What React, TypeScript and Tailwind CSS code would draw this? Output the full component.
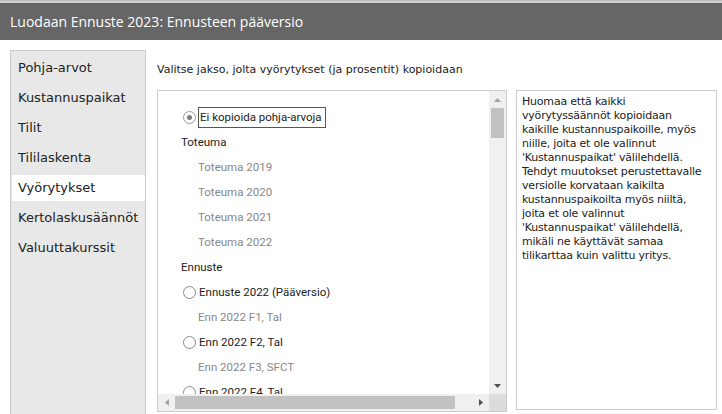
import React from "react";

const tabs = [
  "Pohja-arvot",
  "Kustannuspaikat",
  "Tilit",
  "Tililaskenta",
  "Vyörytykset",
  "Kertolaskusäännöt",
  "Valuuttakurssit",
];

type Row =
  | { kind: "radio"; label: string; checked?: boolean; focused?: boolean }
  | { kind: "group"; label: string }
  | { kind: "item"; label: string };

const rows: Row[] = [
  { kind: "radio", label: "Ei kopioida pohja-arvoja", checked: true, focused: true },
  { kind: "group", label: "Toteuma" },
  { kind: "item", label: "Toteuma 2019" },
  { kind: "item", label: "Toteuma 2020" },
  { kind: "item", label: "Toteuma 2021" },
  { kind: "item", label: "Toteuma 2022" },
  { kind: "group", label: "Ennuste" },
  { kind: "radio", label: "Ennuste 2022 (Pääversio)" },
  { kind: "item", label: "Enn 2022 F1, Tal" },
  { kind: "radio", label: "Enn 2022 F2, Tal" },
  { kind: "item", label: "Enn 2022 F3, SFCT" },
  { kind: "radio", label: "Enn 2022 F4, Tal" },
];

const note = [
  "Huomaa että kaikki",
  "vyörytyssäännöt kopioidaan",
  "kaikille kustannuspaikoille, myös",
  "niille, joita et ole valinnut",
  "'Kustannuspaikat' välilehdellä.",
  "Tehdyt muutokset perustettavalle",
  "versiolle korvataan kaikilta",
  "kustannuspaikoilta myös niiltä,",
  "joita et ole valinnut",
  "'Kustannuspaikat' välilehdellä,",
  "mikäli ne käyttävät samaa",
  "tilikarttaa kuin valittu yritys.",
];

function Radio({ checked }: { checked?: boolean }) {
  return (
    <span
      className={`flex h-[13px] w-[13px] shrink-0 items-center justify-center rounded-full border bg-white ${
        checked ? "border-[#9a9a9a]" : "border-[#8a8a8a]"
      }`}
    >
      {checked && <span className="h-[5px] w-[5px] rounded-full bg-[#7a7a7a]" />}
    </span>
  );
}

export default function App() {
  return (
    <div className="flex h-[414px] w-[722px] flex-col overflow-hidden bg-white font-['DejaVu_Sans',sans-serif]">
      <div className="h-[3px] border-t border-[#bdbdbd] bg-[#d0d0d0]" />
      <div className="flex h-[37px] items-center bg-[#666666] px-[10px] font-['Open_Sans',sans-serif] text-[14px] text-white">
        Luodaan Ennuste 2023: Ennusteen pääversio
      </div>

      <div className="flex min-h-0 flex-1 pt-[10px]">
        <div className="ml-[10px] flex w-[136px] shrink-0 flex-col border border-b-0 border-[#cccccc] bg-[#e8e8e8] pt-[2px] pl-[1px]">
          {tabs.map((t) => (
            <div key={t} className="h-[30px] py-[2px]">
              <div
                className={`flex h-full items-center pl-[6px] text-[13px] text-[#222] ${
                  t === "Vyörytykset" ? "rounded-l-[2px] bg-white" : ""
                }`}
              >
                {t}
              </div>
            </div>
          ))}
        </div>

        <div className="flex min-w-0 flex-1 flex-col pl-[11px]">
          <div className="flex h-[40px] items-center text-[11px] text-[#222]">
            Valitse jakso, jolta vyörytykset (ja prosentit) kopioidaan
          </div>
          <div className="flex min-h-0 flex-1 gap-[9px] pb-[2px]">
            <div className="flex h-[322px] w-[350px] flex-col border border-[#cccccc]">
              <div className="flex min-h-0 flex-1">
                <div className="flex-1 overflow-hidden pl-[25px] pt-[14px] font-['Roboto',sans-serif] text-[11.5px]">
                  {rows.map((r) => (
                    <div key={r.label} className="flex h-[25px] items-center">
                      {r.kind === "radio" && (
                        <div className="flex items-center gap-[2px]">
                          <Radio checked={r.checked} />
                          <span
                            className={`px-[1px] text-[#222] ${
                              r.focused ? "border border-[#555] py-[1px] pr-[3px]" : ""
                            }`}
                          >
                            {r.label}
                          </span>
                        </div>
                      )}
                      {r.kind === "group" && <span className="-ml-[2px] text-[#222]">{r.label}</span>}
                      {r.kind === "item" && <span className="pl-[15px] text-[#888]">{r.label}</span>}
                    </div>
                  ))}
                </div>
                <div className="flex w-[17px] flex-col bg-[#f0f0f0]">
                  <div className="flex h-[17px] items-center justify-center">
                    <svg width="7" height="4" viewBox="0 0 7 4">
                      <path d="M0 4 L3.5 0 L7 4 Z" fill="#a3a3a3" />
                    </svg>
                  </div>
                  <div className="mx-[2px] h-[30px] bg-[#c1c1c1]" />
                  <div className="flex-1" />
                  <div className="flex h-[17px] items-center justify-center">
                    <svg width="7" height="4" viewBox="0 0 7 4">
                      <path d="M0 0 L7 0 L3.5 4 Z" fill="#505050" />
                    </svg>
                  </div>
                </div>
              </div>
              <div className="flex h-[17px] shrink-0">
                <div className="flex flex-1 items-center bg-[#f0f0f0]">
                  <div className="flex w-[17px] items-center justify-center">
                    <svg width="4" height="7" viewBox="0 0 4 7">
                      <path d="M4 0 L4 7 L0 3.5 Z" fill="#a3a3a3" />
                    </svg>
                  </div>
                  <div className="h-[13px] w-[280px] bg-[#c1c1c1]" />
                  <div className="flex-1" />
                  <div className="flex w-[17px] items-center justify-center">
                    <svg width="4" height="7" viewBox="0 0 4 7">
                      <path d="M0 0 L4 3.5 L0 7 Z" fill="#505050" />
                    </svg>
                  </div>
                </div>
                <div className="w-[17px] bg-[#dcdcdc]" />
              </div>
            </div>

            <div className="h-[320px] w-[201px] border border-[#cccccc] px-[5px] pt-[4px] text-[11px] leading-[14px] tracking-[-0.2px] text-[#222]">
              {note.map((l) => (
                <div key={l} className="whitespace-nowrap">
                  {l}
                </div>
              ))}
            </div>
          </div>
        </div>
      </div>
    </div>
  );
}
